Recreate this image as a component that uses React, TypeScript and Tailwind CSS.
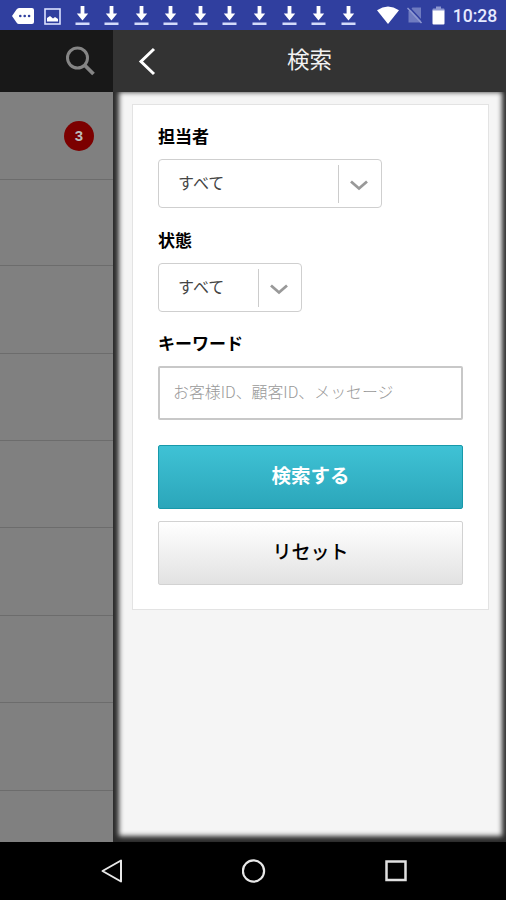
import { ReactNode } from 'react'

const downloads = Array.from({ length: 10 }, (_, i) => i)

const rowHeights = ['h-[88px]', 'h-[86px]', 'h-[88px]', 'h-[87px]', 'h-[87px]', 'h-[88px]', 'h-[87px]', 'h-[88px]']

function DownloadIcon() {
  return (
    <svg width="15" height="21" viewBox="0 0 15 21" className="shrink-0">
      <path d="M5.600 1h3.800v7.500h3.800L7.500 15.500 1.800 8.500h3.800z" fill="#fff" />
      <rect x="0.500" y="17.500" width="14" height="2.500" fill="#d3dbfb" />
    </svg>
  )
}

function StatusBar() {
  return (
    <div className="h-[30px] flex items-center bg-[#303f9f] pl-3 shrink-0">
      <svg width="22" height="16" viewBox="0 0 22 16" className="shrink-0 mt-0.5">
        <path d="M7 0h13a2 2 0 0 1 2 2v12a2 2 0 0 1-2 2H7Q5.500 16 4.500 14.500L0 8l4.500-6.500Q5.500 0 7 0z" fill="#fff" />
        <circle cx="8.300" cy="8" r="1.300" fill="#303f9f" />
        <circle cx="12.700" cy="8" r="1.300" fill="#303f9f" />
        <circle cx="17.100" cy="8" r="1.300" fill="#303f9f" />
      </svg>
      <svg width="17" height="17" viewBox="0 0 17 17" className="shrink-0 ml-2.5 mt-0.5">
        <rect x="1" y="1" width="15" height="15" fill="none" stroke="#dbe2ff" strokeWidth="1.600" />
        <path d="M3 13.500V10l3-2 3 2.500 2-1.500 3 2v2.500z" fill="#fff" />
      </svg>
      <div className="flex gap-[14.6px] ml-[13.500px]">
        {downloads.map((i) => (
          <DownloadIcon key={i} />
        ))}
      </div>
      <svg width="22" height="18" viewBox="0 0 22 18" className="shrink-0 ml-[21px]">
        <path d="M0 4.200Q11-3.200 22 4.200L11 18z" fill="#fff" />
      </svg>
      <svg width="16" height="18" viewBox="0 0 16 18" className="shrink-0 ml-2">
        <path d="M5.500 1.500H14v15H1.500V5.500z" fill="#6f7bc0" />
        <path d="M1.500 0.500l14 15" stroke="#303f9f" strokeWidth="1.500" />
        <path d="M0.500 2l14 15" stroke="#8e98d0" strokeWidth="1.500" />
      </svg>
      <svg width="13" height="19" viewBox="0 0 13 19" className="shrink-0 ml-[9px]">
        <path d="M4 0.500h5v2h2.500a1 1 0 0 1 1 1V5H0.500V3.500a1 1 0 0 1 1-1H4z" fill="#8e98d0" />
        <path d="M0.500 4.500h12v13a1 1 0 0 1-1 1h-10a1 1 0 0 1-1-1z" fill="#fff" />
      </svg>
      <span className="ml-2 mt-[3px] w-[46px] whitespace-nowrap text-[17.500px] leading-none font-medium text-[#e6eaff] font-[Roboto,sans-serif]">
        10:28
      </span>
    </div>
  )
}

function Label({ children }: { children: ReactNode }) {
  return <div className="h-6 text-[17px] leading-6 font-bold text-black">{children}</div>
}

function SelectBox({ value, className }: { value: string; className: string }) {
  return (
    <button className={`flex h-[49px] shrink-0 items-center rounded border border-[#cfcfcf] bg-white ${className}`}>
      <span className="flex-1 pb-[3px] pl-[19px] text-left text-[16px] leading-6 text-[#444]">{value}</span>
      <span className="h-[38px] w-px bg-[#ccc]" />
      <span className="flex w-[42px] justify-center">
        <svg width="18" height="11" viewBox="0 0 18 11" className="mt-[3px] mr-[3px]">
          <path d="M1 1.500l8 7 8-7" fill="none" stroke="#999" strokeWidth="2.800" />
        </svg>
      </span>
    </button>
  )
}

function SearchPanel() {
  return (
    <div className="flex flex-1 flex-col bg-[#2b2b2b]">
      <header className="relative grid h-[62px] grid-cols-[1fr_auto_1fr] items-center bg-[#333]">
        <svg width="18" height="29" viewBox="0 0 18 29" className="ml-[25px]">
          <path d="M16 2L3 14.500 16 27" fill="none" stroke="#fff" strokeWidth="3" />
        </svg>
        <h1 className="-mt-[7px] text-[22.500px] leading-8 text-[#f2f2f2]">検索</h1>
      </header>
      {/* outer and inset shadow together give the sheet its soft edge */}
      <div className="mr-1 mb-[6px] ml-[6px] flex-1 bg-[#f5f5f5] pr-[13px] pl-[13px] pt-[12px] shadow-[0_0_5px_#f5f5f5,inset_0_0_5px_#2b2b2b]">
        <form className="flex h-[506px] flex-col border border-[#e3e3e3] bg-white px-[25px] pt-[19px]">
          <Label>担当者</Label>
          <SelectBox value="すべて" className="mt-[11px] w-[224px]" />
          <div className="mt-5">
            <Label>状態</Label>
          </div>
          <SelectBox value="すべて" className="mt-[11px] w-[144px]" />
          <div className="mt-[19px]">
            <Label>キーワード</Label>
          </div>
          <input
            className="mt-[11px] h-[54px] rounded-xs border-2 border-[#c8c8c8] bg-white px-[13px] pb-[3px] text-[15.900px] text-[#333] placeholder:font-light placeholder:text-[#999]"
            placeholder="お客様ID、顧客ID、メッセージ"
          />
          <button
            type="button"
            className="mt-[25px] h-[64px] rounded-xs border border-[#1799aa] bg-linear-to-b from-[#3fc2d5] to-[#2ba6ba] pb-1 text-[19.500px] font-bold text-white"
          >
            検索する
          </button>
          <button
            type="button"
            className="mt-3 h-[64px] rounded-xs border border-[#d2d2d2] bg-linear-to-b from-white to-[#e2e2e2] pb-[3px] text-[19px] font-medium text-black"
          >
            リセット
          </button>
        </form>
      </div>
    </div>
  )
}

export default function App() {
  return (
    <div className="flex h-[900px] w-[506px] flex-col overflow-hidden bg-black font-['Noto_Sans_CJK_JP',sans-serif]">
      <StatusBar />
      <div className="flex h-[812px] shrink-0">
        <aside className="w-[113px] shrink-0 overflow-hidden bg-[#808080]">
          <div className="flex h-[62px] items-center bg-[#181818] pl-[65px]">
            <svg width="30" height="30" viewBox="0 0 30 30">
              <circle cx="12.500" cy="12" r="10" fill="none" stroke="#858585" strokeWidth="3" />
              <path d="M19.500 19l9 9" stroke="#858585" strokeWidth="3.800" />
            </svg>
          </div>
          {rowHeights.map((height, i) => (
            <div key={i} className={`border-b border-[#6c6c6c] pt-[29px] pl-16 ${height}`}>
              {i === 0 && (
                <span className="flex h-[30px] w-[30px] items-center justify-center rounded-full bg-[#7c0000] text-[15px] font-bold text-[#bbb] font-['Liberation_Sans',sans-serif]">
                  3
                </span>
              )}
            </div>
          ))}
        </aside>
        <SearchPanel />
      </div>
      <nav className="flex flex-1 items-center">
        <svg width="22" height="24" viewBox="0 0 22 24" className="ml-[101px]">
          <path d="M20 1.500v21L1.500 12z" fill="none" stroke="#e8e8e8" strokeWidth="2" strokeLinejoin="round" />
        </svg>
        <svg width="24" height="24" viewBox="0 0 24 24" className="ml-[119px]">
          <circle cx="11.500" cy="12" r="10.600" fill="none" stroke="#e8e8e8" strokeWidth="2.200" />
        </svg>
        <svg width="22" height="22" viewBox="0 0 22 22" className="ml-[119px]">
          <rect x="1.500" y="1.500" width="19" height="18.500" fill="none" stroke="#e0e0e0" strokeWidth="2.500" />
        </svg>
      </nav>
    </div>
  )
}
